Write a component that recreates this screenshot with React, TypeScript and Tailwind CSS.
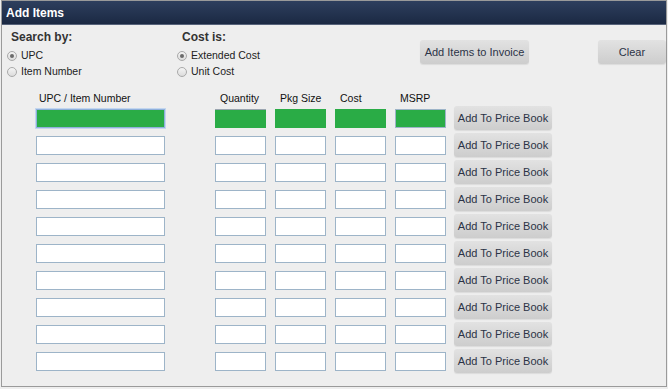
const rows = Array.from({ length: 10 }, (_, i) => i);

function Radio({ checked, label }: { checked?: boolean; label: string }) {
  return (
    <label className="flex h-[16px] items-center gap-[4px] text-[10.5px] text-[#222]">
      <span className="flex h-[10px] w-[10px] items-center justify-center rounded-full border border-[#a9a9a9] bg-gradient-to-b from-[#f4f4f4] to-[#dcdcdc]">
        {checked && <span className="h-[4px] w-[4px] rounded-full bg-[#6b6b6b]" />}
      </span>
      {label}
    </label>
  );
}

function GrayButton({ label, className }: { label: string; className: string }) {
  return (
    <button
      className={`rounded-[3px] bg-gradient-to-b from-[#e2e2e2] to-[#cdcdcd] text-[11px] text-[#2b3346] shadow-[0_1px_1px_rgba(0,0,0,0.08)] ${className}`}
    >
      {label}
    </button>
  );
}

const field = "box-border h-[19px] border border-[#9db4c8] bg-white";

export default function App() {
  return (
    <div className="h-[389px] w-[668px] bg-[#eeeeee] font-['Liberation_Sans',Arial,sans-serif]">
      <div className="ml-[1px] box-border h-[387px] w-[666px] border border-[#9a9a9a] bg-[#eeeeee]">
        <div className="flex h-[24px] items-center border-b border-[#56627a] bg-gradient-to-b from-[#2e3f5e] to-[#1b2943] pl-[4px] text-[12px] font-bold text-white">
          Add Items
        </div>

        {/* search options */}
        <div className="flex items-start">
          <div className="w-[175px] pl-[5px] pt-[5px]">
            <div className="mb-[4px] pl-[4px] text-[12px] font-bold leading-[14px] text-[#333]">Search by:</div>
            <Radio checked label="UPC" />
            <Radio label="Item Number" />
          </div>
          <div className="w-[243px] pt-[5px]">
            <div className="mb-[4px] pl-[5px] text-[12px] font-bold leading-[14px] text-[#333]">Cost is:</div>
            <Radio checked label="Extended Cost" />
            <Radio label="Unit Cost" />
          </div>
          <GrayButton label="Add Items to Invoice" className="mt-[15px] h-[24px] w-[109px]" />
          <GrayButton label="Clear" className="ml-[69px] mt-[15px] h-[24px] w-[68px]" />
        </div>

        {/* item grid */}
        <div className="mt-[11px] pl-[34px]">
          <div className="flex h-[15px] items-center text-[10.5px] text-[#111]">
            <div className="w-[179px] pl-[3px]">UPC / Item Number</div>
            <div className="w-[60px] pl-[5px]">Quantity</div>
            <div className="w-[60px] pl-[5px]">Pkg Size</div>
            <div className="w-[60px] pl-[5px]">Cost</div>
            <div className="w-[60px] pl-[5px]">MSRP</div>
          </div>
          <div className="flex flex-col gap-[3px]">
            {rows.map((i) =>
              i === 0 ? (
                <div key={i} className="flex h-[24px] items-center">
                  <div className="box-border h-[19px] w-[129px] border border-[#8fb0dc] bg-[#2aac46] shadow-[0_0_0_1px_#c3d6ee]" />
                  <div className="ml-[50px] box-border h-[19px] w-[51px] border-t border-[#9aa5b0] bg-[#2aac46]" />
                  <div className="ml-[9px] h-[19px] w-[51px] bg-[#2aac46]" />
                  <div className="ml-[9px] h-[19px] w-[51px] bg-[#2aac46]" />
                  <div className="ml-[9px] box-border h-[19px] w-[51px] border border-[#9db4c8] bg-[#2aac46]" />
                  <GrayButton label="Add To Price Book" className="ml-[8px] h-[24px] w-[98px]" />
                </div>
              ) : (
                <div key={i} className="flex h-[24px] items-center">
                  <div className={`${field} w-[129px]`} />
                  <div className={`${field} ml-[50px] w-[51px]`} />
                  <div className={`${field} ml-[9px] w-[51px]`} />
                  <div className={`${field} ml-[9px] w-[51px]`} />
                  <div className={`${field} ml-[9px] w-[51px]`} />
                  <GrayButton label="Add To Price Book" className="ml-[8px] h-[24px] w-[98px]" />
                </div>
              )
            )}
          </div>
        </div>
      </div>
    </div>
  );
}
